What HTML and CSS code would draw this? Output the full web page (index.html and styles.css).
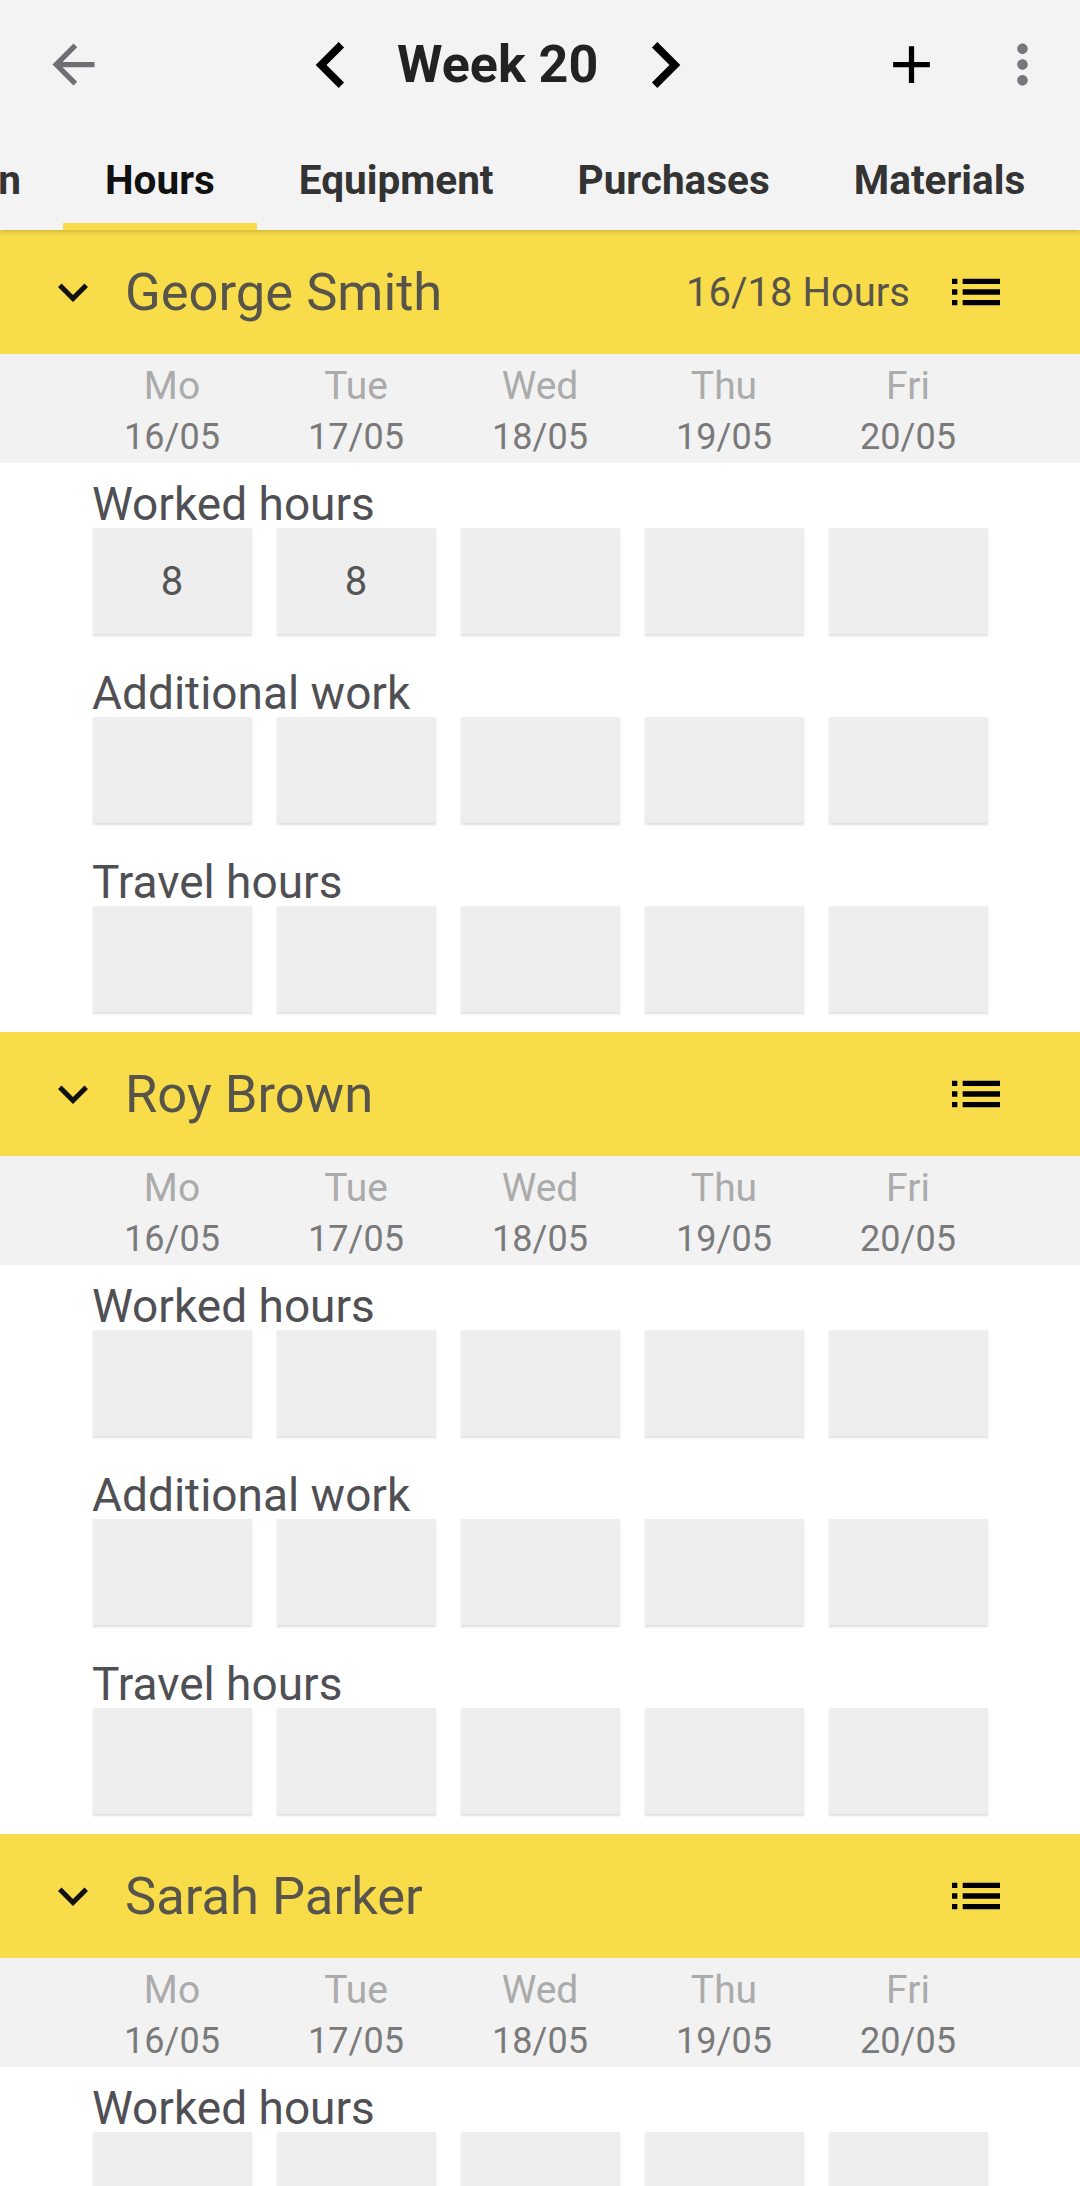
FILE: index.html
```html
<!DOCTYPE html>
<html lang="en">
<head>
    <meta charset="UTF-8">
    <meta name="viewport" content="width=device-width, initial-scale=1.0">
    <title>Week 20</title>
    <link rel="stylesheet" href="styles.css">
</head>
<body>
<div class="screen">
    <div class="appbar">
        <div class="toolbar">
            <svg class="back-btn" viewBox="0 0 24 24"><path d="M20 11H7.83l5.59-5.59L12 4l-8 8 8 8 1.41-1.41L7.83 13H20v-2z"/></svg>
            <div class="week-nav">
                <svg class="week-arrow" viewBox="0 0 24 24"><path d="M15.41 7.41L14 6l-6 6 6 6 1.41-1.41L10.83 12z"/></svg>
                <h1 class="week-title">Week 20</h1>
                <svg class="week-arrow" viewBox="0 0 24 24"><path d="M10 6L8.59 7.41 13.17 12l-4.58 4.59L10 18l6-6z"/></svg>
            </div>
            <svg class="add-btn" viewBox="0 0 24 24"><path d="M19 13h-6v6h-2v-6H5v-2h6V5h2v6h6v2z"/></svg>
            <svg class="more-btn" viewBox="0 0 24 24"><path d="M12 8c1.1 0 2-.9 2-2s-.9-2-2-2-2 .9-2 2 .9 2 2 2zm0 2c-1.1 0-2 .9-2 2s.9 2 2 2 2-.9 2-2-.9-2-2-2zm0 6c-1.1 0-2 .9-2 2s.9 2 2 2 2-.9 2-2-.9-2-2-2z"/></svg>
        </div>
        <div class="tabs">
            <div class="tab tab-first">Information</div>
            <div class="tab active">Hours</div>
            <div class="tab">Equipment</div>
            <div class="tab">Purchases</div>
            <div class="tab">Materials</div>
        </div>
    </div>

    <!-- George Smith -->
    <div class="worker">
        <div class="worker-header">
            <svg class="expand-icon" viewBox="0 0 24 24"><path d="M16.59 8.59L12 13.17 7.41 8.59 6 10l6 6 6-6z"/></svg>
            <span class="worker-name">George Smith</span>
            <span class="worker-total">16/18 Hours</span>
            <svg class="list-icon" viewBox="0 0 24 24"><path d="M3 13h2v-2H3v2zm0 4h2v-2H3v2zm0-8h2V7H3v2zm4 4h14v-2H7v2zm0 4h14v-2H7v2zM7 7v2h14V7H7z"/></svg>
        </div>
        <div class="days">
            <div class="day"><div class="day-name">Mo</div><div class="day-date">16/05</div></div>
            <div class="day"><div class="day-name">Tue</div><div class="day-date">17/05</div></div>
            <div class="day"><div class="day-name">Wed</div><div class="day-date">18/05</div></div>
            <div class="day"><div class="day-name">Thu</div><div class="day-date">19/05</div></div>
            <div class="day"><div class="day-name">Fri</div><div class="day-date">20/05</div></div>
        </div>
        <div class="fields">
            <div class="field">
                <div class="field-label">Worked hours</div>
                <div class="cells">
                    <div class="cell">8</div><div class="cell">8</div><div class="cell"></div><div class="cell"></div><div class="cell"></div>
                </div>
            </div>
            <div class="field">
                <div class="field-label">Additional work</div>
                <div class="cells">
                    <div class="cell"></div><div class="cell"></div><div class="cell"></div><div class="cell"></div><div class="cell"></div>
                </div>
            </div>
            <div class="field">
                <div class="field-label">Travel hours</div>
                <div class="cells">
                    <div class="cell"></div><div class="cell"></div><div class="cell"></div><div class="cell"></div><div class="cell"></div>
                </div>
            </div>
        </div>
    </div>

    <!-- Roy Brown -->
    <div class="worker">
        <div class="worker-header">
            <svg class="expand-icon" viewBox="0 0 24 24"><path d="M16.59 8.59L12 13.17 7.41 8.59 6 10l6 6 6-6z"/></svg>
            <span class="worker-name">Roy Brown</span>
            <svg class="list-icon" viewBox="0 0 24 24"><path d="M3 13h2v-2H3v2zm0 4h2v-2H3v2zm0-8h2V7H3v2zm4 4h14v-2H7v2zm0 4h14v-2H7v2zM7 7v2h14V7H7z"/></svg>
        </div>
        <div class="days">
            <div class="day"><div class="day-name">Mo</div><div class="day-date">16/05</div></div>
            <div class="day"><div class="day-name">Tue</div><div class="day-date">17/05</div></div>
            <div class="day"><div class="day-name">Wed</div><div class="day-date">18/05</div></div>
            <div class="day"><div class="day-name">Thu</div><div class="day-date">19/05</div></div>
            <div class="day"><div class="day-name">Fri</div><div class="day-date">20/05</div></div>
        </div>
        <div class="fields">
            <div class="field">
                <div class="field-label">Worked hours</div>
                <div class="cells">
                    <div class="cell"></div><div class="cell"></div><div class="cell"></div><div class="cell"></div><div class="cell"></div>
                </div>
            </div>
            <div class="field">
                <div class="field-label">Additional work</div>
                <div class="cells">
                    <div class="cell"></div><div class="cell"></div><div class="cell"></div><div class="cell"></div><div class="cell"></div>
                </div>
            </div>
            <div class="field">
                <div class="field-label">Travel hours</div>
                <div class="cells">
                    <div class="cell"></div><div class="cell"></div><div class="cell"></div><div class="cell"></div><div class="cell"></div>
                </div>
            </div>
        </div>
    </div>

    <!-- Sarah Parker (only the top of it is on screen) -->
    <div class="worker">
        <div class="worker-header">
            <svg class="expand-icon" viewBox="0 0 24 24"><path d="M16.59 8.59L12 13.17 7.41 8.59 6 10l6 6 6-6z"/></svg>
            <span class="worker-name">Sarah Parker</span>
            <svg class="list-icon" viewBox="0 0 24 24"><path d="M3 13h2v-2H3v2zm0 4h2v-2H3v2zm0-8h2V7H3v2zm4 4h14v-2H7v2zm0 4h14v-2H7v2zM7 7v2h14V7H7z"/></svg>
        </div>
        <div class="days">
            <div class="day"><div class="day-name">Mo</div><div class="day-date">16/05</div></div>
            <div class="day"><div class="day-name">Tue</div><div class="day-date">17/05</div></div>
            <div class="day"><div class="day-name">Wed</div><div class="day-date">18/05</div></div>
            <div class="day"><div class="day-name">Thu</div><div class="day-date">19/05</div></div>
            <div class="day"><div class="day-name">Fri</div><div class="day-date">20/05</div></div>
        </div>
        <div class="fields">
            <div class="field">
                <div class="field-label">Worked hours</div>
                <div class="cells">
                    <div class="cell"></div><div class="cell"></div><div class="cell"></div><div class="cell"></div><div class="cell"></div>
                </div>
            </div>
        </div>
    </div>
</div>
</body>
</html>
```

FILE: styles.css
```css
body {
    margin: 0;
    padding: 0;
    background-color: #fff;
    font-family: Roboto, "Noto Sans", "Liberation Sans", sans-serif;
    color: #333;
}
.screen {
    height: 100vh;
    overflow: hidden;
}
.appbar {
    background-color: #f3f3f3;
    position: relative;
    z-index: 2;
    box-shadow: 0 2px 5px rgba(0, 0, 0, 0.18);
}
.toolbar {
    height: 129px;
    display: flex;
    align-items: center;
}
.back-btn {
    width: 63px;
    height: 63px;
    margin-left: 42px;
    fill: #6f6e74;
}
.week-nav {
    display: flex;
    align-items: center;
    margin-left: 180px;
}
.week-arrow {
    width: 92px;
    height: 92px;
    fill: #000;
}
.week-title {
    margin: 0 21px 0 20px;
    font-size: 52px;
    font-weight: 700;
    color: #222;
    line-height: 1;
}
.add-btn {
    width: 63px;
    height: 63px;
    margin-left: auto;
    fill: #000;
}
.more-btn {
    width: 63px;
    height: 63px;
    margin-left: 48px;
    margin-right: 26px;
    fill: #77767c;
}
.tabs {
    height: 101px;
    display: flex;
    overflow: hidden;
}
.tab {
    position: relative;
    flex-shrink: 0;
    display: flex;
    align-items: center;
    padding: 0 42px;
    font-size: 40.5px;
    font-weight: 700;
    color: #333;
    white-space: nowrap;
}
.tab-first {
    width: 294px;
    box-sizing: border-box;
    justify-content: flex-end;
    margin-left: -231px;
}
.tab.active {
    color: #111;
}
.tab.active::after {
    content: "";
    position: absolute;
    left: 0;
    right: 0;
    bottom: 0;
    height: 7px;
    background-color: #f8dc4a;
}
.worker-header {
    height: 124px;
    display: flex;
    align-items: center;
    padding: 0 72px 0 43px;
    background-color: #f9dc49;
}
.expand-icon {
    width: 60px;
    height: 60px;
    margin-right: 22px;
    fill: #111;
}
.worker-name {
    flex: 1;
    font-size: 52.5px;
    color: #57544b;
}
.worker-total {
    font-size: 40px;
    color: #57544b;
    margin-right: 34px;
}
.list-icon {
    width: 64px;
    height: 64px;
    fill: #000;
}
.days {
    display: grid;
    grid-template-columns: repeat(5, 184px);
    padding: 9px 0 2px 80px;
    background-color: #f2f2f2;
    text-align: center;
}
.day-name {
    font-size: 39px;
    line-height: 47px;
    color: #ababab;
}
.day-date {
    margin-top: 4px;
    font-size: 36px;
    line-height: 47px;
    color: #7a7a7a;
}
.fields {
    padding: 17px 0 20px;
}
.field + .field {
    margin-top: 35px;
}
.field-label {
    padding-left: 92px;
    font-size: 46px;
    line-height: 48px;
    color: #4f4f54;
}
.cells {
    display: grid;
    grid-template-columns: repeat(5, 184px);
    padding-left: 80px;
}
.cell {
    height: 106px;
    margin: 0 12.5px;
    background-color: #eee;
    box-shadow: 0 2px 2px rgba(0, 0, 0, 0.13);
    display: flex;
    align-items: center;
    justify-content: center;
    font-size: 40px;
    color: #555;
}
```
